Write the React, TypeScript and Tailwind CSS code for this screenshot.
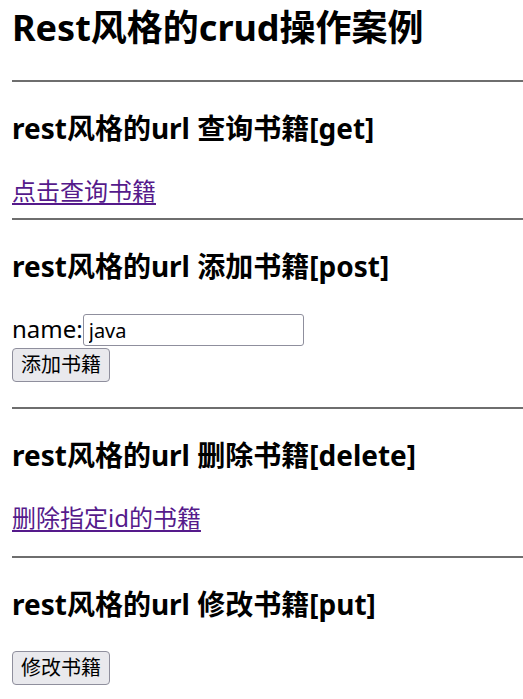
const font = { fontFamily: '"Noto Sans", "Noto Sans CJK SC", sans-serif' };

function Rule({ className }: { className: string }) {
  return <hr className={`border-0 border-t-2 border-[#6e6e6e] ${className}`} />;
}

function Heading({ children, className }: { children: React.ReactNode; className: string }) {
  return <h3 className={`text-[28px] font-bold leading-[36px] ${className}`}>{children}</h3>;
}

function GrayButton({ label, className }: { label: string; className: string }) {
  return (
    <button
      type="button"
      className={`h-[34px] w-[98px] rounded-[4px] border border-[#8f8f9d] bg-[#e9e9ed] text-[20px] leading-[32px] text-black ${className}`}
    >
      {label}
    </button>
  );
}

export default function App() {
  return (
    <div className="min-h-[699px] bg-white pl-[12px] text-black" style={font}>
      <h1 className="mt-[4px] text-[36px] font-bold leading-[48px]">Rest风格的crud操作案例</h1>

      <Rule className="mt-[28px]" />
      <Heading className="mt-[28px]">rest风格的url 查询书籍[get]</Heading>
      <div className="mt-[29px] text-[24px] leading-[32px]">
        <a href="#" className="text-[#551a8b] underline decoration-2 underline-offset-[3px]">点击查询书籍</a>
      </div>

      <Rule className="mt-[11px]" />
      <Heading className="mt-[28px]">rest风格的url 添加书籍[post]</Heading>
      <form className="mt-[30px]" onSubmit={(e) => e.preventDefault()}>
        <div className="flex items-baseline">
          <span className="text-[24px] leading-[24px]">name:</span>
          <input
            type="text"
            defaultValue="java"
            className="h-[32px] w-[221px] rounded-[3px] border border-[#8f8f9d] px-[5px] text-[20px] text-black outline-none"
          />
        </div>
        <GrayButton label="添加书籍" className="mt-[2px]" />
      </form>

      <Rule className="mt-[25px]" />
      <Heading className="mt-[28px]">rest风格的url 删除书籍[delete]</Heading>
      <div className="mt-[29px] text-[24px] leading-[32px]">
        <a href="#" className="text-[#551a8b] underline decoration-2 underline-offset-[3px]">删除指定id的书籍</a>
      </div>

      <Rule className="mt-[22px]" />
      <Heading className="mt-[28px]">rest风格的url 修改书籍[put]</Heading>
      <GrayButton label="修改书籍" className="mt-[29px]" />
    </div>
  );
}
